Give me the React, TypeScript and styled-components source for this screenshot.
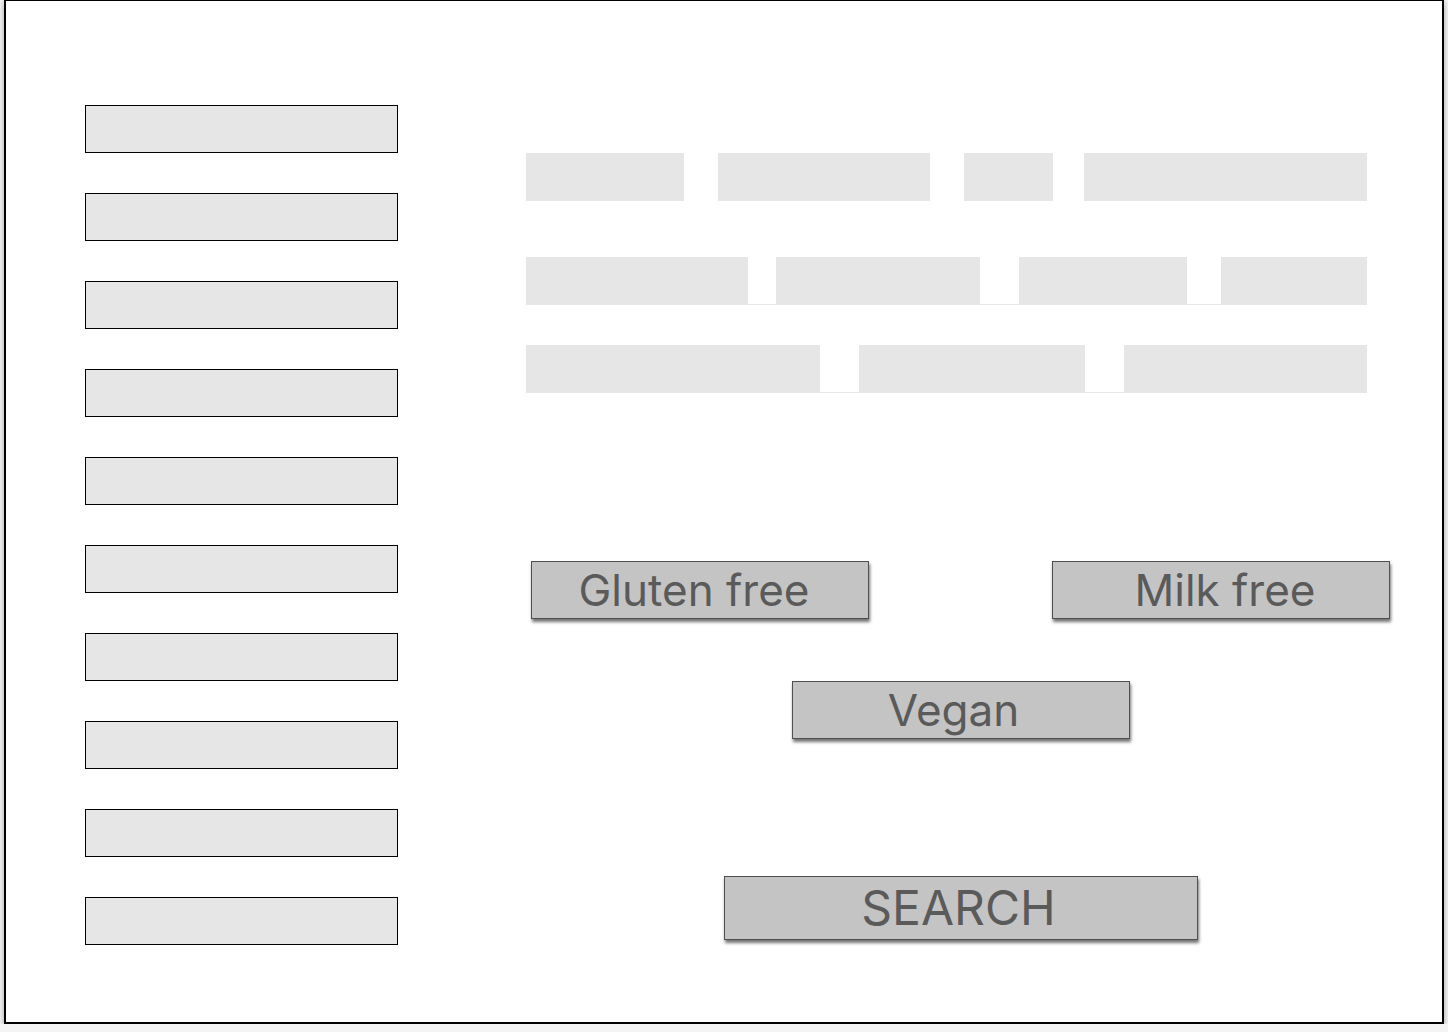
import React from "react";
import styled, { createGlobalStyle } from "styled-components";

const Global = createGlobalStyle`
  html, body { margin: 0; padding: 0; background: #f4f4f4; }
  body { font-family: Inter, "Noto Sans", "Liberation Sans", sans-serif; }
  * { box-sizing: border-box; }
`;

const Frame = styled.div`
  margin-left: 4px;
  width: 1440px;
  height: 1024px;
  background: #ffffff;
  border: 2px solid #000;
  border-top-width: 1px;
  box-shadow: 0 2px 6px rgba(0, 0, 0, 0.35);
  display: flex;
  align-items: flex-start;
  padding: 104px 0 0 79px;
`;

const LeftColumn = styled.div`
  display: flex;
  flex-direction: column;
  gap: 40px;
  width: 313px;
`;

const ListBox = styled.div`
  height: 48px;
  background: #e6e6e6;
  border: 1px solid #000;
`;

const RightColumn = styled.div`
  margin-left: 128px;
  margin-top: 48px;
  width: 864px;
  display: flex;
  flex-direction: column;
`;

const ChipRow = styled.div<{ $top: number; $filled: boolean }>`
  margin-top: ${(p) => p.$top}px;
  width: 841px;
  height: 48px;
  display: flex;
  background: ${(p) => (p.$filled ? "#e6e6e6" : "transparent")};
`;

const Chip = styled.div<{ $w: number }>`
  width: ${(p) => p.$w}px;
  height: 100%;
  background: #e6e6e6;
`;

const Gap = styled.div<{ $w: number; $inset: boolean }>`
  width: ${(p) => p.$w}px;
  height: ${(p) => (p.$inset ? "47px" : "100%")};
  background: #ffffff;
`;

const ButtonArea = styled.div`
  padding-left: 5px;
  display: flex;
  flex-direction: column;
`;

const ButtonRow = styled.div<{ $top: number; $justify: string }>`
  margin-top: ${(p) => p.$top}px;
  display: flex;
  justify-content: ${(p) => p.$justify};
`;

const FilterButton = styled.button<{ $w: number; $h: number; $size: number; $shift: number }>`
  width: ${(p) => p.$w}px;
  height: ${(p) => p.$h}px;
  background: #c4c4c4;
  border: 1px solid #4f4f4f;
  box-shadow: 1px 3px 3px rgba(0, 0, 0, 0.55);
  color: #5a5a5a;
  font-family: Inter, "Noto Sans", "Liberation Sans", sans-serif;
  font-size: ${(p) => p.$size}px;
  font-weight: 400;
  line-height: 1;
  display: flex;
  align-items: center;
  justify-content: center;
  padding: 0 ${(p) => (p.$shift < 0 ? -2 * p.$shift : 0)}px 0
    ${(p) => (p.$shift > 0 ? 2 * p.$shift : 0)}px;
  cursor: pointer;
`;

type RowSpec = { top: number; filled: boolean; parts: number[]; inset: boolean };

const rows: RowSpec[] = [
  { top: 0, filled: false, parts: [158, 34, 212, 34, 89, 31, 283], inset: false },
  { top: 56, filled: true, parts: [222, 28, 204, 39, 168, 34, 146], inset: true },
  { top: 40, filled: true, parts: [294, 39, 226, 39, 243], inset: true },
];

export default function App() {
  return (
    <>
      <Global />
      <Frame>
        <LeftColumn>
          {Array.from({ length: 10 }).map((_, i) => (
            <ListBox key={i} />
          ))}
        </LeftColumn>
        <RightColumn>
          {rows.map((r, ri) => (
            <ChipRow key={ri} $top={r.top} $filled={r.filled}>
              {r.parts.map((w, i) =>
                i % 2 === 0 ? (
                  <Chip key={i} $w={w} />
                ) : (
                  <Gap key={i} $w={w} $inset={r.inset} />
                )
              )}
            </ChipRow>
          ))}
          <ButtonArea>
            <ButtonRow $top={168} $justify="space-between">
              <FilterButton $w={338} $h={58} $size={44} $shift={-6}>Gluten free</FilterButton>
              <FilterButton $w={338} $h={58} $size={44} $shift={4}>Milk free</FilterButton>
            </ButtonRow>
            <ButtonRow $top={62} $justify="center">
              <FilterButton $w={338} $h={58} $size={44} $shift={-7}>Vegan</FilterButton>
            </ButtonRow>
            <ButtonRow $top={137} $justify="center">
              <FilterButton $w={474} $h={64} $size={48} $shift={-2}>SEARCH</FilterButton>
            </ButtonRow>
          </ButtonArea>
        </RightColumn>
      </Frame>
    </>
  );
}
